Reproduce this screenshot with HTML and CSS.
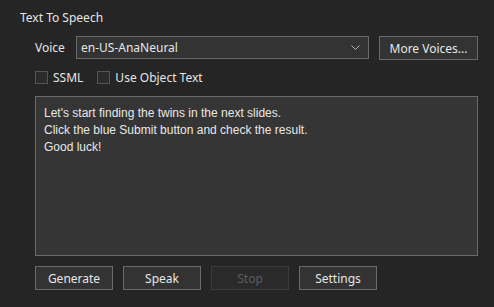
FILE: index.html
```html
<!DOCTYPE html>
<html lang="en">
<head>
    <meta charset="UTF-8">
    <meta name="viewport" content="width=device-width, initial-scale=1.0">
    <title>Text To Speech</title>
    <link rel="stylesheet" href="styles.css">
</head>
<body>

<div class="panel">
    <div class="title">Text To Speech</div>

    <div class="content">
        <div class="voice-row">
            <label class="voice-label" for="voice">Voice</label>
            <div class="combo" id="voice">
                <span>en-US-AnaNeural</span>
                <svg class="chevron" width="9" height="5" viewBox="0 0 9 5">
                    <path d="M0.5 0.5 L4.5 4.5 L8.5 0.5" fill="none" stroke="#b4b4b4" stroke-width="1"/>
                </svg>
            </div>
            <button class="btn more-btn">More Voices...</button>
        </div>

        <div class="check-row">
            <label class="check"><span class="box"></span>SSML</label>
            <label class="check"><span class="box"></span>Use Object Text</label>
        </div>

        <textarea class="text-box" readonly>Let's start finding the twins in the next slides.
Click the blue Submit button and check the result.
Good luck!</textarea>

        <div class="actions">
            <button class="btn">Generate</button>
            <button class="btn">Speak</button>
            <button class="btn" disabled>Stop</button>
            <button class="btn">Settings</button>
        </div>
    </div>
</div>

</body>
</html>
```

FILE: styles.css
```css
/* Dark dialog panel */
body {
    margin: 0;
    background-color: #252525;
    font-family: "Noto Sans", "Open Sans", sans-serif;
    font-size: 12px;
    color: #e6e6e6;
}

.panel {
    width: 494px;
    height: 307px;
    padding: 9px 0 0 20px;
    box-sizing: border-box;
}

.title {
    height: 18px;
    line-height: 18px;
}

.content {
    margin-left: 15px;
    width: 443px;
}

.voice-row {
    display: flex;
    align-items: flex-start;
    margin-top: 9px;
    height: 24px;
}

.voice-label {
    width: 41px;
    line-height: 23px;
}

.combo {
    width: 293px;
    height: 23px;
    box-sizing: border-box;
    border: 1px solid #6a6a6a;
    background: #333333;
    display: flex;
    align-items: center;
    justify-content: space-between;
    padding: 0 8px 0 4px;
}

.chevron {
    display: block;
}

.btn {
    width: 78px;
    height: 24px;
    box-sizing: border-box;
    border: 1px solid #6a6a6a;
    background: #333333;
    color: #e6e6e6;
    font-family: inherit;
    font-size: 12px;
    padding: 0;
}

.btn:disabled {
    background: #2a2a2a;
    border-color: #3c3c3c;
    color: #5c5c5c;
}

.more-btn {
    width: 99px;
    margin-left: 10px;
}

.check-row {
    display: flex;
    gap: 14px;
    margin-top: 11px;
    height: 13px;
    align-items: center;
}

.check {
    display: flex;
    align-items: center;
    gap: 5px;
}

.box {
    width: 13px;
    height: 13px;
    box-sizing: border-box;
    border: 1px solid #555555;
    background: #2b2b2b;
}

.text-box {
    display: block;
    margin: 12px 0 0 0;
    width: 443px;
    height: 160px;
    box-sizing: border-box;
    border: 1px solid #6b6b6b;
    background: #353535;
    color: #e8e8e8;
    font-family: "Liberation Sans", Arial, sans-serif;
    font-size: 12px;
    line-height: 17px;
    padding: 8px 8px;
    resize: none;
    outline: none;
}

.actions {
    display: flex;
    gap: 10px;
    margin-top: 10px;
}
```
